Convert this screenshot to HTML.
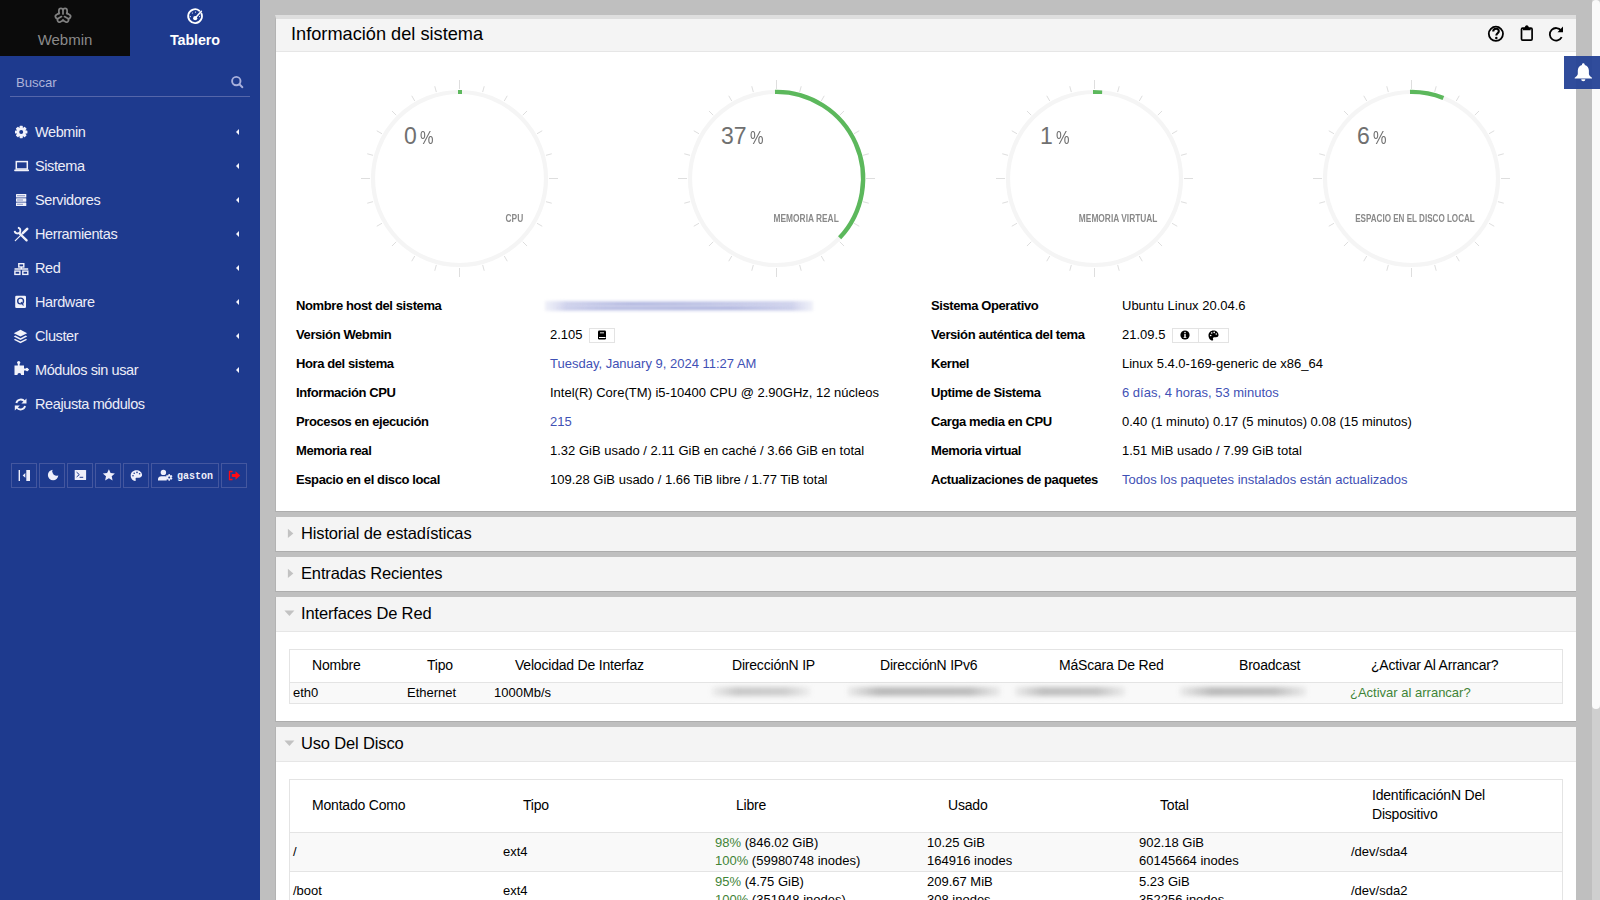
<!DOCTYPE html>
<html><head><meta charset="utf-8">
<style>
*{box-sizing:border-box;margin:0;padding:0}
html,body{width:1600px;height:900px;overflow:hidden}
body{background:#bfbfbf;font-family:"Liberation Sans",sans-serif;color:#000;position:relative}
.abs{position:absolute;white-space:nowrap}
#side{position:absolute;left:0;top:0;width:260px;height:900px;background:#1e3a8e;color:#fff}
#tabW{position:absolute;left:0;top:0;width:130px;height:56px;background:#0b0b0b}
.tabtxt{position:absolute;top:31px;width:130px;text-align:center;font-size:15px;line-height:18px}
.menu{position:absolute;left:35px;font-size:14.5px;letter-spacing:-.4px;line-height:18px;color:#ededf7}
.micon{position:absolute;left:14px}
.caret{position:absolute;left:236.4px;width:0;height:0;border-top:3.2px solid transparent;border-bottom:3.2px solid transparent;border-right:3.7px solid #f4f4fc}
.sbtn{position:absolute;top:463px;height:25px;border:1px solid #44579f}
.panel{position:absolute;left:275px;width:1301px;background:#fff;border-left:1px solid #b3b3b3}
.phead{position:absolute;left:0;top:0;right:0;background:#f4f4f4;border-bottom:1px solid #e6e6e6}
.lbl{position:absolute;font-size:13px;font-weight:bold;letter-spacing:-.4px;line-height:16px;white-space:nowrap}
.val{position:absolute;font-size:13px;line-height:16px;white-space:nowrap}
.lnk{color:#3f51b5}
.th{position:absolute;font-size:14px;letter-spacing:-.2px;line-height:16px;white-space:nowrap}
.td{position:absolute;font-size:13px;line-height:16px;white-space:nowrap}
.grn{color:#3f8437}
.pct{position:absolute;top:121.7px;font-size:23px;line-height:28px;color:#707070;white-space:nowrap}
.pct span{display:inline-block;font-size:19px;margin-left:3px;transform:scaleX(.8);transform-origin:left}
.glbl{position:absolute;top:210.5px;text-align:right;font-size:11px;font-weight:bold;line-height:14px;color:#8a8a8a;white-space:nowrap;transform:scaleX(.76);transform-origin:right}
.blur{position:absolute;filter:blur(2px)}
</style></head>
<body>
<!-- SIDEBAR -->
<div id="side">
  <div id="tabW"></div>
  <div class="tabtxt" style="left:0;color:#8a8a8a">Webmin</div>
  <div class="tabtxt" style="left:130px;font-weight:bold;color:#fff;font-size:14.3px;letter-spacing:-.1px">Tablero</div>
  <!-- search -->
  <div class="abs" style="left:16px;top:75.2px;font-size:13.2px;letter-spacing:-.1px;line-height:16px;color:#adb3d9">Buscar</div>
  
  <div class="abs" style="left:10px;top:96px;width:240px;height:1px;background:#5566aa"></div>

  <!-- menu -->
  <div class="menu" style="top:123px">Webmin</div>
  <div class="menu" style="top:157px">Sistema</div>
  <div class="menu" style="top:191px">Servidores</div>
  <div class="menu" style="top:225px">Herramientas</div>
  <div class="menu" style="top:259px">Red</div>
  <div class="menu" style="top:293px">Hardware</div>
  <div class="menu" style="top:327px">Cluster</div>
  <div class="menu" style="top:361px">Módulos sin usar</div>
  <div class="menu" style="top:395px">Reajusta módulos</div>
  <div class="caret" style="top:128.8px"></div>
  <div class="caret" style="top:162.8px"></div>
  <div class="caret" style="top:196.8px"></div>
  <div class="caret" style="top:230.8px"></div>
  <div class="caret" style="top:264.8px"></div>
  <div class="caret" style="top:298.8px"></div>
  <div class="caret" style="top:332.8px"></div>
  <div class="caret" style="top:366.8px"></div>

  <svg class="abs" style="left:0;top:0" width="260" height="500" viewBox="0 0 260 500">
    <!-- webmin logo -->
    <g fill="none" stroke="#808080" stroke-width="1.9" stroke-linejoin="round" stroke-linecap="round" transform="translate(63 15.7) scale(.91) translate(-63 -16.3)">
      <g id="wl"><path d="M58.5 14.2 V10.6 A2.25 2.25 0 0 1 63 10.6 V14.4 M63 10.6 A2.25 2.25 0 0 1 67.5 10.6 V14.2"/></g>
      <use href="#wl" transform="rotate(120 63 16.3)"/>
      <use href="#wl" transform="rotate(240 63 16.3)"/>
    </g>
    <!-- tablero -->
<g transform="translate(0 .8)">
    <g fill="none" stroke="#fff" stroke-width="1.8" stroke-linecap="round">
      <path d="M199.3 9.9 A6.9 6.9 0 1 0 201.4 12.6"/>
      <path d="M195.2 17.3 L201.4 10.4" stroke-width="1.5"/>
    </g>
    <circle cx="195.2" cy="17.4" r="2.1" fill="#fff"/>
    <g fill="#fff"><circle cx="192.4" cy="12.2" r=".6"/><circle cx="195.5" cy="11.3" r=".6"/><circle cx="190.3" cy="15.8" r=".6"/><circle cx="199.6" cy="15.8" r=".6"/></g>
</g>
    <!-- search -->
    <g fill="none" stroke="#a9b0dc" stroke-width="1.9" stroke-linecap="round">
      <circle cx="236.3" cy="81.1" r="4.2"/><path d="M239.4 84.3 L242.4 87.2"/>
    </g>
    <!-- menu icons -->
    <g fill="#f2f2fa">
      <!-- gear -->
      <g transform="translate(21.2 132)">
        <circle r="4.6"/>
        <rect x="-1.6" y="-6.2" width="3.2" height="12.4" rx=".6"/>
        <rect x="-1.6" y="-6.2" width="3.2" height="12.4" rx=".6" transform="rotate(45)"/>
        <rect x="-1.6" y="-6.2" width="3.2" height="12.4" rx=".6" transform="rotate(90)"/>
        <rect x="-1.6" y="-6.2" width="3.2" height="12.4" rx=".6" transform="rotate(135)"/>
        <circle r="2" fill="#1e3a8e"/>
      </g>
      <!-- laptop -->
      <rect x="16.3" y="161.6" width="11" height="7.4" fill="none" stroke="#f2f2fa" stroke-width="1.5"/>
      <rect x="14.2" y="169.4" width="14.8" height="1.8" rx=".6"/>
      <!-- server -->
      <rect x="16" y="194" width="10.3" height="3.4" rx=".5"/>
      <rect x="16" y="198.3" width="10.3" height="3.4" rx=".5"/>
      <rect x="16" y="202.6" width="10.3" height="3.4" rx=".5"/>
      <g fill="#1e3a8e"><rect x="17.5" y="195.2" width="1" height="1"/><rect x="19.5" y="195.2" width="1" height="1"/><rect x="21.5" y="195.2" width="1" height="1"/><rect x="23.5" y="195.2" width="1" height="1"/>
      <rect x="17.5" y="199.5" width="1" height="1"/><rect x="19.5" y="199.5" width="1" height="1"/><rect x="21.5" y="199.5" width="1" height="1"/>
      <rect x="17.5" y="203.8" width="1" height="1"/><rect x="19.5" y="203.8" width="1" height="1"/><rect x="21.5" y="203.8" width="1" height="1"/></g>
      <!-- tools -->
      <path d="M15.3 240.7 L22.2 233.8" stroke="#f2f2fa" stroke-width="1.2" stroke-linecap="round"/>
      <path d="M22.8 233.2 L27.2 228.8" stroke="#f2f2fa" stroke-width="2.6" stroke-linecap="round"/>
      <path d="M19.3 233.2 L26.6 240.4" stroke="#f2f2fa" stroke-width="2.3" stroke-linecap="round"/>
      <path d="M15.3 228.6 A2.9 2.9 0 1 0 19.9 228.6" fill="none" stroke="#f2f2fa" stroke-width="1.8" transform="rotate(-45 17.8 230.6)"/>
      <!-- network -->
      <g fill="none" stroke="#f2f2fa" stroke-width="1.4">
        <rect x="18.8" y="263.7" width="5" height="3.3"/>
        <rect x="14.9" y="271.1" width="5" height="3.3"/>
        <rect x="22.8" y="271.1" width="5" height="3.3"/>
        <path d="M21.3 267 V269 M14.5 269 H28.2"/>
      </g>
      <!-- hdd -->
      <rect x="15.2" y="295.8" width="10.8" height="12.2" rx="1.3"/>
      <circle cx="20.6" cy="301" r="3.6" fill="#1e3a8e"/>
      <circle cx="20.6" cy="301" r="2.2"/>
      <path d="M21 302 L23.5 305.5" stroke="#1e3a8e" stroke-width="1.2"/>
      <!-- layers -->
      <path d="M20.5 329.8 L27.2 333.2 L20.5 336.6 L13.8 333.2 Z"/>
      <path d="M15.2 335.6 L20.5 338.3 L25.8 335.6 L27.2 336.4 L20.5 339.9 L13.8 336.4 Z"/>
      <path d="M15.2 338.9 L20.5 341.6 L25.8 338.9 L27.2 339.7 L20.5 343.2 L13.8 339.7 Z"/>
      <!-- puzzle -->
      <path d="M14.5 365.5 H17.8 V364 A1.6 1.6 0 1 1 19.6 364 V365.5 H24 V368.5 H25.8 A1.6 1.6 0 1 1 25.8 370.6 H24 V375 H21.2 A1.8 1.8 0 0 0 17.4 375 H14.5 Z"/>
      <path d="M25.8 369.6 H28.8" stroke="#f2f2fa" stroke-width="1"/>
      <!-- sync -->
      <g fill="none" stroke="#f2f2fa" stroke-width="1.8">
        <path d="M16.3 403 A4.6 4.6 0 0 1 24.6 401.6"/>
        <path d="M25.1 406 A4.6 4.6 0 0 1 16.8 407.4"/>
      </g>
      <path d="M26.5 398.5 V403.6 H21.4 Z"/>
      <path d="M14.8 410.4 V405.4 H19.9 Z"/>
    </g>
    <!-- bottom buttons icons -->
    <g fill="#eeeefa">
      <rect x="18.6" y="470" width="1.4" height="11"/>
      <path d="M25.3 473.1 V477.7 L22.7 475.4 Z"/>
      <rect x="26.3" y="470" width="3.7" height="11"/>
      <circle cx="53.1" cy="475" r="5.2"/><circle cx="56.8" cy="471.3" r="4.5" fill="#1e3a8e"/>
      <rect x="74.7" y="470" width="11.4" height="10.1" rx=".6"/>
      <path d="M76.6 472.2 L79.3 474.6 L76.6 477" fill="none" stroke="#1e3a8e" stroke-width="1"/>
      <rect x="79.6" y="476.8" width="3.6" height="1" fill="#1e3a8e"/>
      <path d="M108.9 469.2 L110.6 473 L114.9 473.4 L111.7 476.2 L112.6 480.6 L108.9 478.3 L105.1 480.6 L106 476.2 L102.8 473.4 L107.1 473 Z"/>
      <path d="M136.4 470.3 C133 470.3 130.7 472.6 130.7 475.6 C130.7 478.8 133 481 135 481 C136.2 481 135.8 479.9 135.6 479.3 C135.2 478.3 135.9 477.7 136.9 477.7 H139 C140.8 477.7 142.1 476.6 142.1 475.1 C142.1 472.4 139.6 470.3 136.4 470.3 Z"/>
      <g fill="#1e3a8e"><circle cx="133" cy="475.8" r=".8"/><circle cx="134.2" cy="473.2" r=".8"/><circle cx="137" cy="472.4" r=".8"/><circle cx="139.6" cy="473.8" r=".8"/></g>
      <!-- user cog -->
      <circle cx="163.4" cy="472.4" r="2.7"/>
      <path d="M158 480.6 V479 C158 477.3 159.5 476.2 161.2 476.2 H165.3 C166 476.2 166.6 476.4 167.1 476.7 L166.6 480.6 Z"/>
      <g transform="translate(169.2 477.4)"><circle r="2.4"/><rect x="-.8" y="-3.3" width="1.6" height="6.6"/><rect x="-.8" y="-3.3" width="1.6" height="6.6" transform="rotate(60)"/><rect x="-.8" y="-3.3" width="1.6" height="6.6" transform="rotate(120)"/><circle r="1" fill="#1e3a8e"/></g>
    </g>
    <!-- logout -->
    <path d="M232.5 471.5 H229.5 V479.5 H232.5" fill="none" stroke="#ff0a14" stroke-width="1.3"/>
    <path d="M231.8 474 H235.5 V471.2 L240.3 475.5 L235.5 479.8 V477 H231.8 Z" fill="#ff0a14"/>
  </svg>
  <div class="abs" style="left:177px;top:469.5px;font-family:'Liberation Mono',monospace;font-size:10px;font-weight:bold;line-height:14px;color:#eeeefa">gaston</div>

  <!-- bottom buttons -->
  <div class="sbtn" style="left:11px;width:26px"></div>
  <div class="sbtn" style="left:39px;width:26px"></div>
  <div class="sbtn" style="left:67px;width:26px"></div>
  <div class="sbtn" style="left:95px;width:26px"></div>
  <div class="sbtn" style="left:123px;width:26px"></div>
  <div class="sbtn" style="left:151px;width:68px"></div>
  <div class="sbtn" style="left:221px;width:26px"></div>
</div>

<!-- MAIN PANEL 1 -->
<div class="panel" style="top:15px;height:497px;border-top:4px solid #dedede;border-bottom:1px solid #adadad">
  <div class="phead" style="height:33px"></div>
  <div class="abs" style="left:15px;top:5.3px;font-size:18.2px;line-height:20px">Información del sistema</div>
</div>

<!-- PANEL 2 -->
<div class="panel" style="top:517px;height:35px;background:#f4f4f4;border-bottom:1px solid #adadad">
  <div class="abs" style="left:25px;top:6px;font-size:16.5px;letter-spacing:-.15px;line-height:20px">Historial de estadísticas</div>
</div>
<!-- PANEL 3 -->
<div class="panel" style="top:557px;height:35px;background:#f4f4f4;border-bottom:1px solid #adadad">
  <div class="abs" style="left:25px;top:6px;font-size:16.5px;letter-spacing:-.15px;line-height:20px">Entradas Recientes</div>
</div>
<!-- PANEL 4 -->
<div class="panel" style="top:597px;height:125px;border-bottom:1px solid #adadad">
  <div class="phead" style="height:35px"></div>
  <div class="abs" style="left:25px;top:6px;font-size:16.5px;letter-spacing:-.15px;line-height:20px">Interfaces De Red</div>
</div>
<!-- PANEL 5 -->
<div class="panel" style="top:727px;height:173px">
  <div class="phead" style="height:35px"></div>
  <div class="abs" style="left:25px;top:6px;font-size:16.5px;letter-spacing:-.15px;line-height:20px">Uso Del Disco</div>
</div>

<!-- gauges -->
<svg class="abs" style="left:354px;top:73px" width="212" height="212" viewBox="0 0 212 212"><circle cx="105.5" cy="105.5" r="86.5" fill="none" stroke="#f5f5f5" stroke-width="4.2"/><path d="M105.50 16.00L105.50 7.00M128.66 19.05L130.22 13.25M150.25 27.99L153.25 22.79M168.79 42.21L173.03 37.97M183.01 60.75L188.21 57.75M191.95 82.34L197.75 80.78M195.00 105.50L204.00 105.50M191.95 128.66L197.75 130.22M183.01 150.25L188.21 153.25M168.79 168.79L173.03 173.03M150.25 183.01L153.25 188.21M128.66 191.95L130.22 197.75M105.50 195.00L105.50 204.00M82.34 191.95L80.78 197.75M60.75 183.01L57.75 188.21M42.21 168.79L37.97 173.03M27.99 150.25L22.79 153.25M19.05 128.66L13.25 130.22M16.00 105.50L7.00 105.50M19.05 82.34L13.25 80.78M27.99 60.75L22.79 57.75M42.21 42.21L37.97 37.97M60.75 27.99L57.75 22.79M82.34 19.05L80.78 13.25" stroke="#dedede" stroke-width="1" fill="none"/><rect x="104.0" y="17.0" width="4" height="4" fill="#5cb85c"/></svg>
<svg class="abs" style="left:671px;top:73px" width="212" height="212" viewBox="0 0 212 212"><circle cx="105.5" cy="105.5" r="86.5" fill="none" stroke="#f5f5f5" stroke-width="4.2"/><path d="M105.50 16.00L105.50 7.00M128.66 19.05L130.22 13.25M150.25 27.99L153.25 22.79M168.79 42.21L173.03 37.97M183.01 60.75L188.21 57.75M191.95 82.34L197.75 80.78M195.00 105.50L204.00 105.50M191.95 128.66L197.75 130.22M183.01 150.25L188.21 153.25M168.79 168.79L173.03 173.03M150.25 183.01L153.25 188.21M128.66 191.95L130.22 197.75M105.50 195.00L105.50 204.00M82.34 191.95L80.78 197.75M60.75 183.01L57.75 188.21M42.21 168.79L37.97 173.03M27.99 150.25L22.79 153.25M19.05 128.66L13.25 130.22M16.00 105.50L7.00 105.50M19.05 82.34L13.25 80.78M27.99 60.75L22.79 57.75M42.21 42.21L37.97 37.97M60.75 27.99L57.75 22.79M82.34 19.05L80.78 13.25" stroke="#dedede" stroke-width="1" fill="none"/><path d="M103.99 18.91 A86.6 86.6 0 0 1 168.63 164.78" stroke="#5cb85c" stroke-width="4.4" fill="none"/></svg>
<svg class="abs" style="left:989px;top:73px" width="212" height="212" viewBox="0 0 212 212"><circle cx="105.5" cy="105.5" r="86.5" fill="none" stroke="#f5f5f5" stroke-width="4.2"/><path d="M105.50 16.00L105.50 7.00M128.66 19.05L130.22 13.25M150.25 27.99L153.25 22.79M168.79 42.21L173.03 37.97M183.01 60.75L188.21 57.75M191.95 82.34L197.75 80.78M195.00 105.50L204.00 105.50M191.95 128.66L197.75 130.22M183.01 150.25L188.21 153.25M168.79 168.79L173.03 173.03M150.25 183.01L153.25 188.21M128.66 191.95L130.22 197.75M105.50 195.00L105.50 204.00M82.34 191.95L80.78 197.75M60.75 183.01L57.75 188.21M42.21 168.79L37.97 173.03M27.99 150.25L22.79 153.25M19.05 128.66L13.25 130.22M16.00 105.50L7.00 105.50M19.05 82.34L13.25 80.78M27.99 60.75L22.79 57.75M42.21 42.21L37.97 37.97M60.75 27.99L57.75 22.79M82.34 19.05L80.78 13.25" stroke="#dedede" stroke-width="1" fill="none"/><path d="M104.0 17.0 L113.2 17.400000000000006 L113.1 21.099999999999994 L104.0 21.0 Z" fill="#5cb85c"/></svg>
<svg class="abs" style="left:1306px;top:73px" width="212" height="212" viewBox="0 0 212 212"><circle cx="105.5" cy="105.5" r="86.5" fill="none" stroke="#f5f5f5" stroke-width="4.2"/><path d="M105.50 16.00L105.50 7.00M128.66 19.05L130.22 13.25M150.25 27.99L153.25 22.79M168.79 42.21L173.03 37.97M183.01 60.75L188.21 57.75M191.95 82.34L197.75 80.78M195.00 105.50L204.00 105.50M191.95 128.66L197.75 130.22M183.01 150.25L188.21 153.25M168.79 168.79L173.03 173.03M150.25 183.01L153.25 188.21M128.66 191.95L130.22 197.75M105.50 195.00L105.50 204.00M82.34 191.95L80.78 197.75M60.75 183.01L57.75 188.21M42.21 168.79L37.97 173.03M27.99 150.25L22.79 153.25M19.05 128.66L13.25 130.22M16.00 105.50L7.00 105.50M19.05 82.34L13.25 80.78M27.99 60.75L22.79 57.75M42.21 42.21L37.97 37.97M60.75 27.99L57.75 22.79M82.34 19.05L80.78 13.25" stroke="#dedede" stroke-width="1" fill="none"/><path d="M103.99 18.91 A86.6 86.6 0 0 1 137.38 24.98" stroke="#5cb85c" stroke-width="4.4" fill="none"/></svg>
<div class="pct" style="left:404px">0<span>%</span></div>
<div class="pct" style="left:721px">37<span>%</span></div>
<div class="pct" style="left:1040px">1<span>%</span></div>
<div class="pct" style="left:1357px">6<span>%</span></div>
<div class="glbl" style="right:1077px">CPU</div>
<div class="glbl" style="right:761px">MEMORIA REAL</div>
<div class="glbl" style="right:443px">MEMORIA VIRTUAL</div>
<div class="glbl" style="right:125px;transform:scaleX(.735)">ESPACIO EN EL DISCO LOCAL</div>

<!-- info table -->
<div class="lbl" style="left:296px;top:298px">Nombre host del sistema</div>
<div class="lbl" style="left:296px;top:327px">Versión Webmin</div>
<div class="lbl" style="left:296px;top:356px">Hora del sistema</div>
<div class="lbl" style="left:296px;top:385px">Información CPU</div>
<div class="lbl" style="left:296px;top:414px">Procesos en ejecución</div>
<div class="lbl" style="left:296px;top:443px">Memoria real</div>
<div class="lbl" style="left:296px;top:472px">Espacio en el disco local</div>

<div class="blur" style="left:545px;top:301px;width:268px;height:10px;background:linear-gradient(90deg,rgba(205,208,234,.3),#d3d6ee 8%,#cfd2ec 50%,#d3d6ee 92%,rgba(205,208,234,.3));filter:blur(1.5px)"></div>
<div class="blur" style="left:560px;top:303px;width:240px;height:2px;background:linear-gradient(90deg,rgba(170,176,220,0),#aab0dc 30%,#b9bee2 60%,rgba(170,176,220,0));filter:blur(1px)"></div>
<div class="blur" style="left:555px;top:307px;width:250px;height:2px;background:linear-gradient(90deg,rgba(170,176,220,0),#b4b9e0 20%,#a9afdb 70%,rgba(170,176,220,0));filter:blur(1px)"></div>
<div class="val" style="left:550px;top:327px">2.105</div>
<div class="val lnk" style="left:550px;top:356px">Tuesday, January 9, 2024 11:27 AM</div>
<div class="val" style="left:550px;top:385px">Intel(R) Core(TM) i5-10400 CPU @ 2.90GHz, 12 núcleos</div>
<div class="val lnk" style="left:550px;top:414px">215</div>
<div class="val" style="left:550px;top:443px">1.32 GiB usado / 2.11 GiB en caché / 3.66 GiB en total</div>
<div class="val" style="left:550px;top:472px">109.28 GiB usado / 1.66 TiB libre / 1.77 TiB total</div>

<div class="lbl" style="left:931px;top:298px">Sistema Operativo</div>
<div class="lbl" style="left:931px;top:327px">Versión auténtica del tema</div>
<div class="lbl" style="left:931px;top:356px">Kernel</div>
<div class="lbl" style="left:931px;top:385px">Uptime de Sistema</div>
<div class="lbl" style="left:931px;top:414px">Carga media en CPU</div>
<div class="lbl" style="left:931px;top:443px">Memoria virtual</div>
<div class="lbl" style="left:931px;top:472px">Actualizaciones de paquetes</div>

<div class="val" style="left:1122px;top:298px">Ubuntu Linux 20.04.6</div>
<div class="val" style="left:1122px;top:327px">21.09.5</div>
<div class="val" style="left:1122px;top:356px">Linux 5.4.0-169-generic de x86_64</div>
<div class="val lnk" style="left:1122px;top:385px">6 días, 4 horas, 53 minutos</div>
<div class="val" style="left:1122px;top:414px">0.40 (1 minuto) 0.17 (5 minutos) 0.08 (15 minutos)</div>
<div class="val" style="left:1122px;top:443px">1.51 MiB usado / 7.99 GiB total</div>
<div class="val lnk" style="left:1122px;top:472px">Todos los paquetes instalados están actualizados</div>

<!-- small buttons -->
<div class="abs" style="left:589px;top:328px;width:26px;height:15px;border:1px solid #e3e3e3;background:#fff"></div>
<svg class="abs" style="left:597px;top:330px" width="10" height="10" viewBox="0 0 10 10"><rect x="1" y="0.5" width="8" height="9" rx="1.2" fill="#000"/><rect x="3" y="2" width="4" height="1.5" fill="#999"/><rect x="2" y="7" width="6.5" height="1" fill="#fff"/></svg>
<div class="abs" style="left:1172px;top:328px;width:57px;height:15px;border:1px solid #e3e3e3;background:#fff"></div>
<div class="abs" style="left:1198px;top:328px;width:1px;height:15px;background:#e3e3e3"></div>
<svg class="abs" style="left:1180px;top:330px" width="10" height="10" viewBox="0 0 10 10"><circle cx="5" cy="5" r="4.6" fill="#000"/><rect x="4.3" y="4" width="1.4" height="3.6" fill="#fff"/><circle cx="5" cy="2.6" r=".8" fill="#fff"/><rect x="3.6" y="7" width="2.8" height=".8" fill="#fff"/></svg>
<svg class="abs" style="left:1208px;top:330px" width="11" height="11" viewBox="0 0 11 11"><path d="M5.5 .5C2.5 .5 .5 2.8 .5 5.5C.5 8.5 2.6 10.5 4.5 10.5C5.5 10.5 5.2 9.5 5 9C4.6 8 5.3 7.3 6.3 7.3H8C9.5 7.3 10.5 6.3 10.5 5C10.5 2.5 8.3 .5 5.5 .5Z" fill="#000"/><circle cx="2.7" cy="5.5" r=".8" fill="#fff"/><circle cx="3.7" cy="3" r=".8" fill="#fff"/><circle cx="6.2" cy="2.4" r=".8" fill="#fff"/><circle cx="8.3" cy="4" r=".8" fill="#fff"/></svg>

<!-- header icons -->
<svg class="abs" style="left:1480px;top:20px" width="90" height="26" viewBox="1480 20 90 26">
<circle cx="1495.9" cy="33.8" r="7.1" fill="none" stroke="#000" stroke-width="1.8"/>
<path d="M1493.2 31.6C1493.2 29.8 1494.5 28.8 1496 28.8C1497.6 28.8 1498.8 29.8 1498.8 31.2C1498.8 33.2 1496.3 33.3 1496.3 35.4" fill="none" stroke="#000" stroke-width="2.1"/>
<circle cx="1496.3" cy="37.9" r="1.25" fill="#000"/>
<rect x="1521.5" y="28.2" width="10.6" height="12" rx="1.1" fill="none" stroke="#000" stroke-width="1.7"/>
<path d="M1522.9 30.3H1530.7V28.2L1529 28.2C1528.8 26.3 1527.9 25.2 1526.8 25.2C1525.7 25.2 1524.8 26.3 1524.6 28.2L1522.9 28.2Z" fill="#000"/>
<path d="M1561.2 30.6A6.3 6.3 0 1 0 1561.7 37.2" fill="none" stroke="#000" stroke-width="1.8"/>
<path d="M1557.5 32.2L1563 32.2L1563 26.6Z" fill="#000"/>
</svg>
<!-- bell -->
<svg class="abs" style="left:1570px;top:60px;z-index:5" width="26" height="26" viewBox="1570 60 26 26">
<path d="M1583.3 63.3C1582.5 63.3 1582 63.9 1582 64.6V65C1579.4 65.6 1577.8 67.9 1577.8 70.6V73.8C1577.8 75.3 1576.6 76.6 1574.7 77.8V78.6H1592V77.8C1590.1 76.6 1588.9 75.3 1588.9 73.8V70.6C1588.9 67.9 1587.3 65.6 1584.7 65V64.6C1584.7 63.9 1584.2 63.3 1583.3 63.3Z" fill="#fff"/>
<path d="M1581.2 79.2A2.1 2.1 0 0 0 1585.4 79.2Z" fill="#fff"/>
</svg>

<svg class="abs" style="left:280px;top:520px;z-index:3" width="20" height="240" viewBox="280 520 20 240">
<path d="M287.9 528.8L293.3 533.4L287.9 538Z" fill="#c2c2c2"/>
<path d="M287.9 568.8L293.3 573.4L287.9 578Z" fill="#c2c2c2"/>
<path d="M284.4 610.6H294.4L289.4 616Z" fill="#c2c2c2"/>
<path d="M284.4 740.6H294.4L289.4 746Z" fill="#c2c2c2"/>
</svg>
<!-- PANEL 4 content -->
<div class="abs" style="left:289px;top:649px;width:1274px;height:55px;border:1px solid #e4e4e4;background:#fff"></div>
<div class="abs" style="left:290px;top:682px;width:1272px;height:21px;border-top:1px solid #e4e4e4;background:#f9f9f9"></div>
<div class="th" style="left:312px;top:657px">Nombre</div>
<div class="th" style="left:427px;top:657px">Tipo</div>
<div class="th" style="left:515px;top:657px">Velocidad De Interfaz</div>
<div class="th" style="left:732px;top:657px">DirecciónN IP</div>
<div class="th" style="left:880px;top:657px">DirecciónN IPv6</div>
<div class="th" style="left:1059px;top:657px">MáScara De Red</div>
<div class="th" style="left:1239px;top:657px">Broadcast</div>
<div class="th" style="left:1371px;top:657px">¿Activar Al Arrancar?</div>
<div class="td" style="left:293px;top:684.7px">eth0</div>
<div class="td" style="left:407px;top:684.7px">Ethernet</div>
<div class="td" style="left:494px;top:684.7px">1000Mb/s</div>
<div class="blur" style="left:712px;top:687px;width:98px;height:9px;background:linear-gradient(90deg,rgba(200,200,200,.2),#c8c8c8 25%,#cdcdcd 75%,rgba(200,200,200,.2));filter:blur(2.5px)"></div>
<div class="blur" style="left:848px;top:687px;width:152px;height:9px;background:linear-gradient(90deg,rgba(180,180,180,.2),#b9b9b9 20%,#bcbcbc 80%,rgba(180,180,180,.2));filter:blur(2.5px)"></div>
<div class="blur" style="left:1015px;top:687px;width:110px;height:9px;background:linear-gradient(90deg,rgba(185,185,185,.2),#bebebe 25%,#c3c3c3 75%,rgba(185,185,185,.2));filter:blur(2.5px)"></div>
<div class="blur" style="left:1180px;top:687px;width:126px;height:9px;background:linear-gradient(90deg,rgba(180,180,180,.2),#bababa 25%,#bdbdbd 75%,rgba(180,180,180,.2));filter:blur(2.5px)"></div>
<div class="td grn" style="left:1350px;top:684.7px">¿Activar al arrancar?</div>

<!-- PANEL 5 content -->
<div class="abs" style="left:289px;top:779px;width:1274px;height:130px;border:1px solid #e4e4e4;background:#fff"></div>
<div class="abs" style="left:290px;top:832px;width:1272px;height:40px;border-top:1px solid #e4e4e4;border-bottom:1px solid #e4e4e4;background:#f9f9f9"></div>
<div class="th" style="left:312px;top:797px">Montado Como</div>
<div class="th" style="left:523px;top:797px">Tipo</div>
<div class="th" style="left:736px;top:797px">Libre</div>
<div class="th" style="left:948px;top:797px">Usado</div>
<div class="th" style="left:1160px;top:797px">Total</div>
<div class="th" style="left:1372px;top:786px;line-height:19px;white-space:normal;width:180px">IdentificaciónN Del<br>Dispositivo</div>

<div class="td" style="left:293px;top:844px">/</div>
<div class="td" style="left:503px;top:844px">ext4</div>
<div class="td" style="left:715px;top:834px;line-height:18px"><span class="grn">98%</span> (846.02 GiB)<br><span class="grn">100%</span> (59980748 inodes)</div>
<div class="td" style="left:927px;top:834px;line-height:18px">10.25 GiB<br>164916 inodes</div>
<div class="td" style="left:1139px;top:834px;line-height:18px">902.18 GiB<br>60145664 inodes</div>
<div class="td" style="left:1351px;top:844px">/dev/sda4</div>

<div class="td" style="left:293px;top:883px">/boot</div>
<div class="td" style="left:503px;top:883px">ext4</div>
<div class="td" style="left:715px;top:873px;line-height:18px"><span class="grn">95%</span> (4.75 GiB)<br><span class="grn">100%</span> (351948 inodes)</div>
<div class="td" style="left:927px;top:873px;line-height:18px">209.67 MiB<br>308 inodes</div>
<div class="td" style="left:1139px;top:873px;line-height:18px">5.23 GiB<br>352256 inodes</div>
<div class="td" style="left:1351px;top:883px">/dev/sda2</div>

<!-- scrollbar -->
<div class="abs" style="left:1592px;top:0;width:8px;height:900px;background:#cfcfcf"></div>
<div class="abs" style="left:1592px;top:0;width:8px;height:709px;background:#fafafa;border-radius:4px"></div>
<!-- bell -->
<div class="abs" style="left:1564px;top:56px;width:36px;height:33px;background:rgba(37,66,150,.95)"></div>
</body></html>
